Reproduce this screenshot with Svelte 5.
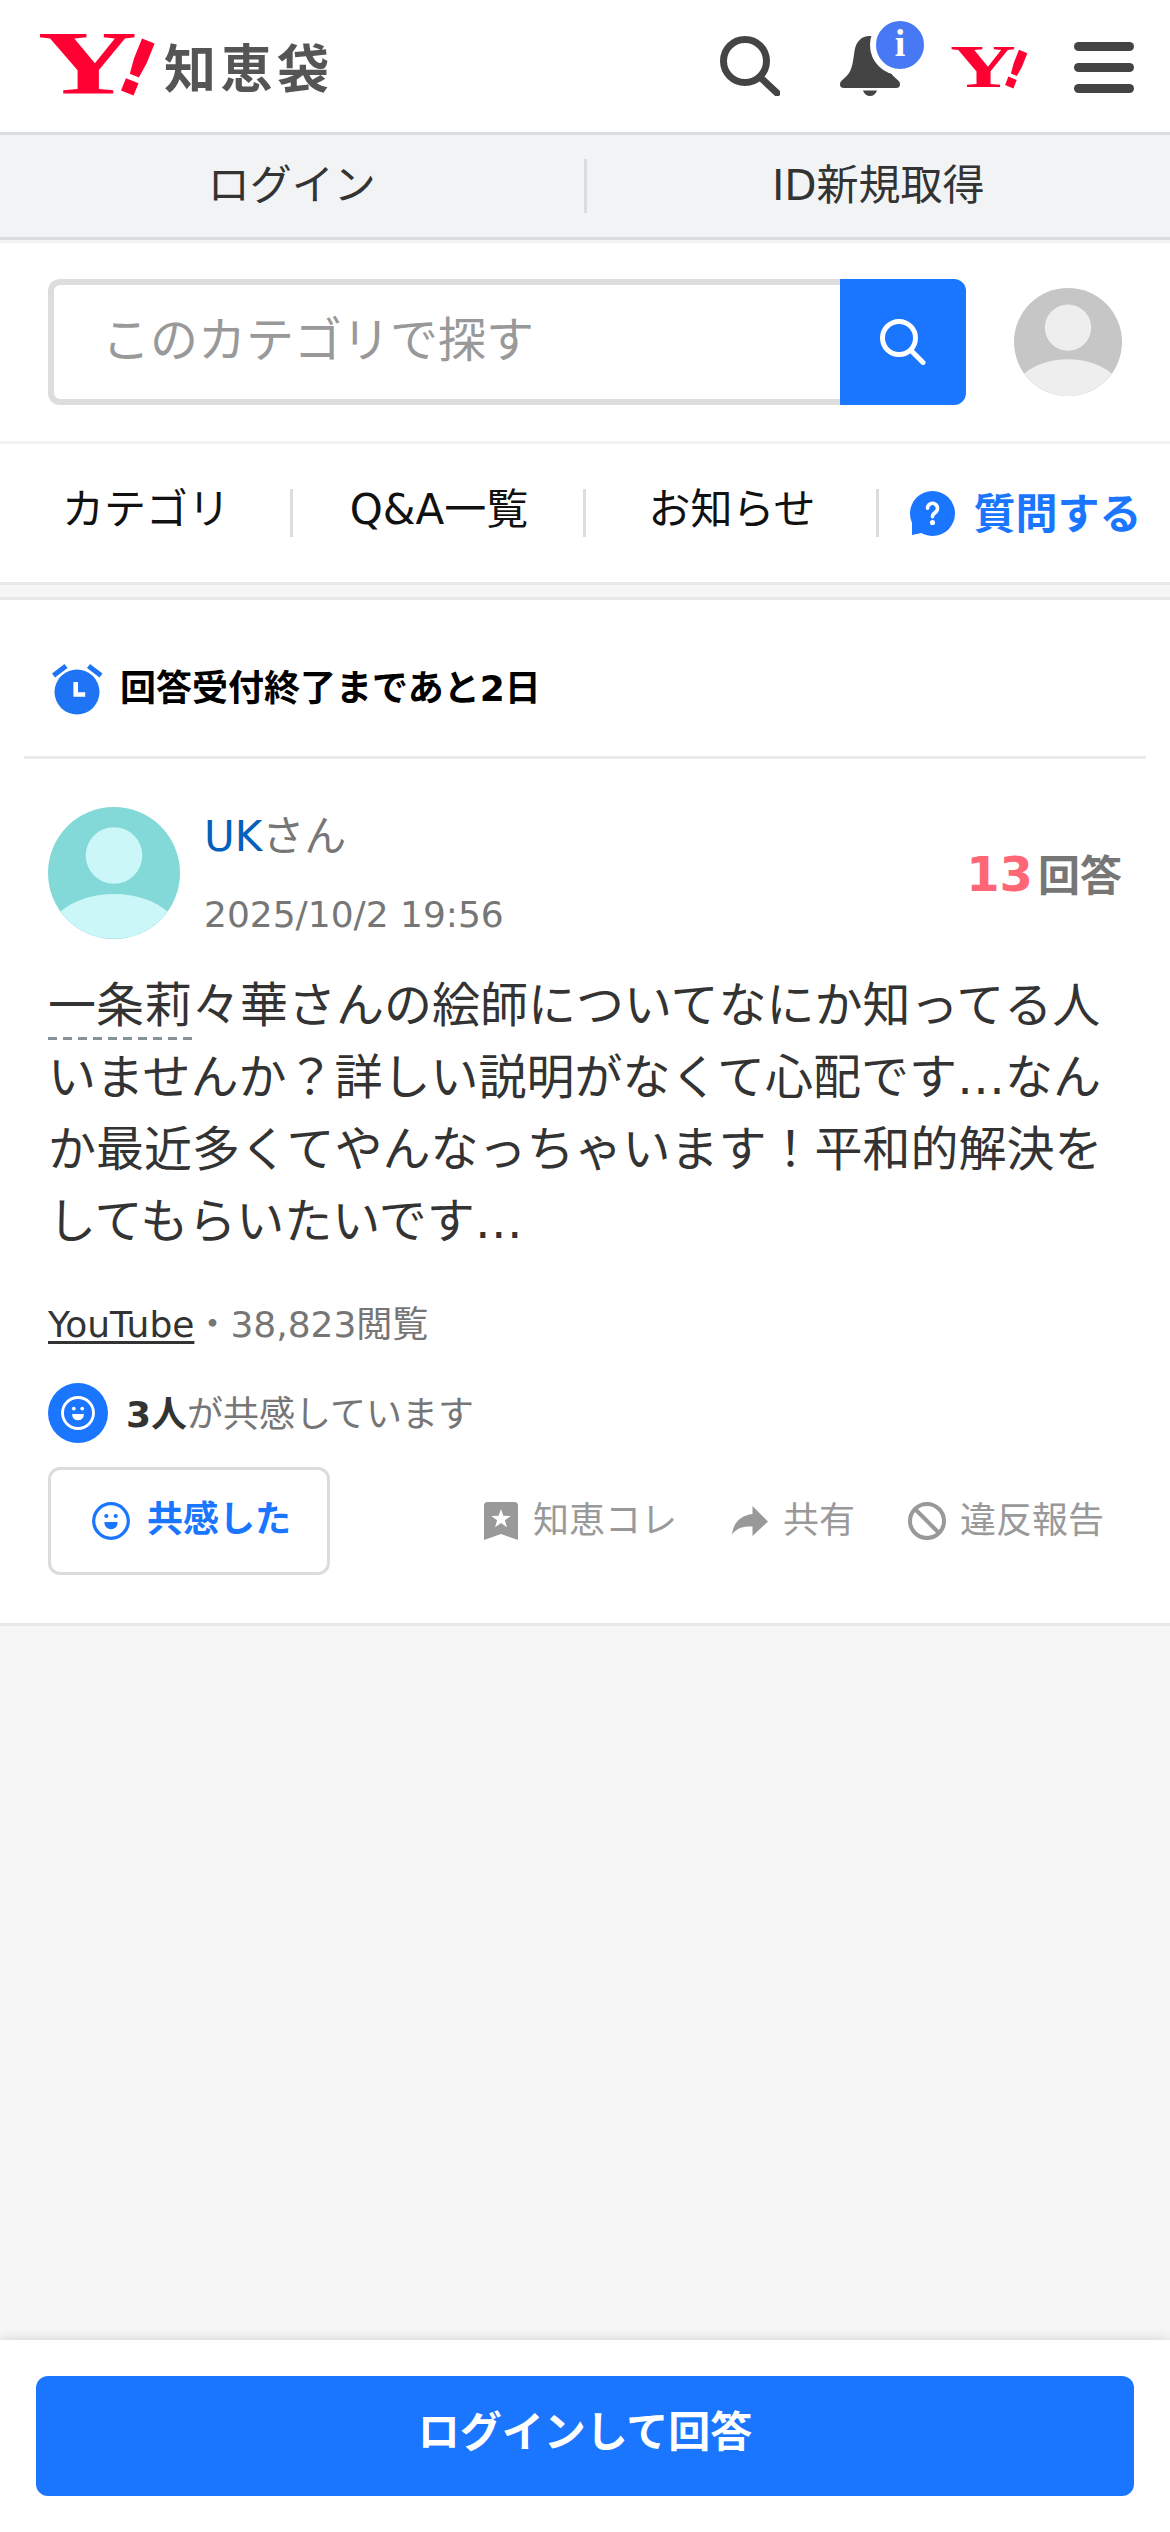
<script>
  const accountLinks = ['ログイン', 'ID新規取得'];
  const navItems = ['カテゴリ', 'Q&A一覧', 'お知らせ'];

  const question = {
    limit: '回答受付終了まであと2日',
    user: 'UK',
    date: '2025/10/2 19:56',
    answers: 13,
    keyword: '一条莉',
    body: '々華さんの絵師についてなにか知ってる人いませんか？詳しい説明がなくて心配です…なんか最近多くてやんなっちゃいます！平和的解決をしてもらいたいです…',
    category: 'YouTube',
    views: '38,823',
    empathy: 3,
  };
</script>

{#snippet yahoo()}
  <svg class="yahoo" viewBox="0 0 118 62" preserveAspectRatio="none">
    <text class="mark" transform="translate(-1.5 61) scale(1.5 1)" font-size="92">Y</text>
    <text class="mark bang" transform="translate(72 53.5) rotate(22)" font-size="77">!</text>
  </svg>
{/snippet}

{#snippet smile()}
  <svg class="smile" viewBox="0 0 38 38">
    <circle cx="19" cy="19" r="17.3" fill="none" stroke="currentColor" stroke-width="3.2" />
    <circle cx="14.3" cy="14" r="2.1" fill="currentColor" />
    <circle cx="23.7" cy="14" r="2.1" fill="currentColor" />
    <path d="M12.5 20h13v1.2a6.5 6 0 0 1-13 0z" fill="currentColor" />
  </svg>
{/snippet}

{#snippet person(back, front)}
  <svg viewBox="0 0 132 132">
    <circle cx="66" cy="66" r="66" fill={back} />
    <circle cx="66" cy="48.5" r="28.3" fill={front} />
    <path d="M12.5 104.5C25 94 44 87 66 87s41 7 53.5 17.5A66 66 0 0 1 12.5 104.5z" fill={front} />
  </svg>
{/snippet}

<div class="page">
  <header class="masthead">
    <a class="logo" href="#top">
      <span class="logo-mark">{@render yahoo()}</span>
      <span class="logo-text">知恵袋</span>
    </a>
    <div class="tools">
      <svg class="tool" viewBox="0 0 60 60">
        <circle cx="25" cy="25" r="21.5" fill="none" stroke="#444" stroke-width="7" />
        <path d="M41 42l16 15" stroke="#444" stroke-width="7" stroke-linecap="round" />
      </svg>
      <div class="bell">
        <svg class="tool" viewBox="0 0 60 60">
          <path d="M30 0c-9 0-14 6-15.5 15C12.5 29 12 36 4 42.5 1 45 0 46 0 48.5 0 51 1.5 52 4 52h52c2.5 0 4-1 4-3.5 0-2.5-1-3.5-4-6C48 36 47.5 29 45.5 15 44 6 39 0 30 0z" fill="#444" />
          <path d="M23 54.5h14c-1 3.5-3.8 5.5-7 5.5s-6-2-7-5.5z" fill="#444" />
        </svg>
        <span class="badge">i</span>
      </div>
      <span class="tool-y">{@render yahoo()}</span>
      <div class="menu"><i></i><i></i><i></i></div>
    </div>
  </header>

  <nav class="account">
    {#each accountLinks as label}
      <a href="#account">{label}</a>
    {/each}
  </nav>

  <div class="search-row">
    <div class="search-box">
      <span class="placeholder">このカテゴリで探す</span>
      <button class="search-btn" aria-label="検索">
        <svg viewBox="0 0 46 46">
          <circle cx="19" cy="19" r="16.5" fill="none" stroke="#fff" stroke-width="5" />
          <path d="M31.5 32l11.5 11.5" stroke="#fff" stroke-width="5" stroke-linecap="round" />
        </svg>
      </button>
    </div>
    <div class="me">{@render person('#c6c6c6', '#eee')}</div>
  </div>

  <nav class="main-nav">
    {#each navItems as item}
      <a href="#nav">{item}</a>
    {/each}
    <a class="ask" href="#ask">
      <svg viewBox="0 0 45 45">
        <circle cx="22.5" cy="22.5" r="22.5" fill="#1a75ff" />
        <path d="M2 28v16l14-3z" fill="#1a75ff" />
        <path d="M17.5 17.3a5 5 0 1 1 7.6 4.3c-1.9 1.2-2.6 2.1-2.6 4.2" fill="none" stroke="#fff" stroke-width="3.6" stroke-linecap="round" />
        <circle cx="22.5" cy="31.5" r="2.6" fill="#fff" />
      </svg>
      <span>質問する</span>
    </a>
  </nav>

  <main class="card">
    <div class="limit">
      <svg viewBox="0 0 51 51">
        <circle cx="25" cy="28" r="22.5" fill="#1f74f5" />
        <path d="M1.5 11.5L14 2M49 11.5L36.5 2" stroke="#1f74f5" stroke-width="5" />
        <path d="M23.7 18v12.5h9.5" fill="none" stroke="#fff" stroke-width="4.6" />
      </svg>
      <span>{question.limit}</span>
    </div>

    <div class="body">
      <div class="author">
        <div class="avatar">{@render person('#82d9d7', '#ccf7f8')}</div>
        <div class="who">
          <p class="name"><a href="#user">{question.user}</a>さん</p>
          <p class="date">{question.date}</p>
        </div>
        <p class="count"><strong>{question.answers}</strong>回答</p>
      </div>

      <p class="text"><span class="keyword">{question.keyword}</span>{question.body}</p>

      <p class="meta"><a href="#category">{question.category}</a>・{question.views}閲覧</p>

      <div class="empathy">
        <span class="disc">{@render smile()}</span>
        <p><b>{question.empathy}人</b>が共感しています</p>
      </div>

      <div class="actions">
        <button class="empathy-btn">{@render smile()}<span>共感した</span></button>
        <div class="links">
          <a class="save" href="#save">
            <svg viewBox="0 0 34 38">
              <path d="M3.5 0h27A3.5 3.5 0 0 1 34 3.5V38l-17-6-17 6V3.5A3.5 3.5 0 0 1 3.5 0z" fill="#999" />
              <path d="M17 7l2.4 6.8 7.4.1-5.9 4.4 2.1 7-6-4.2-6 4.2 2.1-7-5.9-4.4 7.4-.1z" fill="#fff" />
            </svg>
            <span>知恵コレ</span>
          </a>
          <a class="share" href="#share">
            <svg viewBox="0 0 36 30">
              <path d="M20.5 0L36 15.5 20.5 30v-9.5C11 20 5 22 0 28.5 1.5 17 8 9.5 20.5 8z" fill="#999" />
            </svg>
            <span>共有</span>
          </a>
          <a class="report" href="#report">
            <svg viewBox="0 0 38 38">
              <circle cx="19" cy="19" r="17" fill="none" stroke="#999" stroke-width="4" />
              <path d="M7 7l24 24" stroke="#999" stroke-width="4" />
            </svg>
            <span>違反報告</span>
          </a>
        </div>
      </div>
    </div>
  </main>

  <footer class="answer-bar">
    <button>ログインして回答</button>
  </footer>
</div>

<style>
  :global(body) { margin: 0; background: #f6f6f6; }

  .page {
    width: 1170px;
    height: 2532px;
    display: flex;
    flex-direction: column;
    overflow: hidden;
    background: #f6f6f6;
    color: #333;
    font-family: 'DejaVu Sans', 'Noto Sans CJK JP', sans-serif;
    font-size: 36px;
  }
  p { margin: 0; }
  a { color: inherit; text-decoration: none; }
  svg { display: block; flex: none; }
  button { font: inherit; border: 0; padding: 0; margin: 0; }

  /* header */
  .masthead {
    height: 132px;
    display: flex;
    justify-content: space-between;
    padding: 0 36px 0 39px;
    background: #fff;
    border-bottom: 3px solid #dadddf;
  }
  .logo { display: flex; align-items: flex-start; }
  .yahoo { width: 100%; height: 100%; overflow: visible; }
  .mark { font-family: 'Liberation Serif', serif; font-weight: 700; fill: #ff0033; }
  .bang { font-family: 'DejaVu Sans', sans-serif; }
  .logo-mark { width: 118px; height: 62px; margin-top: 33px; }
  .logo-text {
    margin: 40px 0 0 7px;
    font-size: 52px;
    line-height: 60px;
    font-weight: 700;
    letter-spacing: 4.5px;
    color: #555;
  }
  .tools { display: flex; align-items: center; }
  .tool { width: 60px; height: 60px; }
  .bell { position: relative; margin-left: 60px; }
  .badge {
    position: absolute;
    left: 30px;
    top: -21px;
    width: 48px;
    height: 48px;
    border: 6px solid #fff;
    border-radius: 50%;
    background: #4879f5;
    color: #fff;
    font: 700 38px/44px 'Liberation Serif', serif;
    text-align: center;
  }
  .tool-y { width: 78px; height: 42px; margin: 2px 45px 0 51px; }
  .menu { width: 60px; display: flex; flex-direction: column; gap: 12px; margin-top: 3px; }
  .menu i { height: 9px; border-radius: 4.5px; background: #444; }

  .account {
    height: 102px;
    display: flex;
    align-items: center;
    background: #f1f3f5;
    border-bottom: 3px solid #dadcdd;
  }
  .account a {
    flex: 1;
    font-size: 42px;
    line-height: 54px;
    text-align: center;
  }
  .account a + a { border-left: 3px solid #dadcdd; }

  /* search */
  .search-row {
    height: 198px;
    display: flex;
    align-items: center;
    justify-content: space-between;
    padding: 3px 48px 0;
    background: linear-gradient(#f4f4f4 3px, #fff 3px);
    border-bottom: 3px solid #f2f2f2;
  }
  .search-box { width: 918px; height: 126px; display: flex; }
  .placeholder {
    flex: 1;
    box-sizing: border-box;
    border: 6px solid #ddd;
    border-right: 0;
    border-radius: 12px 0 0 12px;
    padding-left: 48px;
    font-size: 48px;
    line-height: 110px;
    color: #999;
  }
  .search-btn {
    width: 126px;
    display: flex;
    align-items: center;
    justify-content: center;
    border-radius: 0 12px 12px 0;
    background: #1a75ff;
  }
  .search-btn svg { width: 46px; height: 46px; }
  .me { width: 108px; height: 108px; }

  .main-nav {
    height: 138px;
    display: flex;
    align-items: center;
    background: #fff;
    border-bottom: 3px solid #e8e8e8;
  }
  .main-nav a {
    flex: 0 0 293px;
    box-sizing: border-box;
    padding: 0 0 6px 2px;
    border-right: 3px solid #ddd;
    font-size: 42px;
    line-height: 42px;
    text-align: center;
    color: #111;
  }
  .main-nav .ask {
    flex: 1;
    display: flex;
    align-items: center;
    justify-content: center;
    gap: 18px;
    padding: 0 0 0 3px;
    border: 0;
    font-weight: 700;
    color: #1a75ff;
  }
  .ask svg { width: 45px; height: 45px; }
  .ask span { padding-top: 4px; }

  /* question card */
  .card {
    margin-top: 12px;
    background: #fff;
    border-top: 3px solid #e8e8e8;
    border-bottom: 3px solid #e8e8e8;
  }
  .limit {
    height: 159px;
    box-sizing: border-box;
    display: flex;
    align-items: center;
    gap: 17px;
    margin: 0 24px;
    padding: 22px 0 0 28px;
    border-bottom: 3px solid #ebebeb;
    line-height: 54px;
    font-weight: 700;
    color: #000;
  }
  .limit svg { width: 51px; height: 51px; }
  .body { padding: 48px; }
  .author { display: flex; align-items: flex-start; height: 132px; }
  .avatar { width: 132px; height: 132px; }
  .who { flex: 1; margin-left: 24px; color: #767676; }
  .name { font-size: 42px; line-height: 60px; }
  .name a { color: #0560bb; }
  .date { margin-top: 21px; line-height: 54px; }
  .count {
    margin-top: 37px;
    font-size: 42px;
    line-height: 60px;
    font-weight: 700;
    color: #767676;
  }
  .count strong { margin-right: 5px; font-size: 48px; color: #ff6676; }

  .text {
    margin-top: 30px;
    font-size: 48px;
    line-height: 72px;
    word-break: break-all;
  }
  .keyword {
    padding-bottom: 7px;
    background: repeating-linear-gradient(90deg, #859398 0 9px, transparent 9px 15px) 0 100% / 100% 3px no-repeat;
  }
  .meta { height: 54px; margin-top: 41px; line-height: 54px; color: #767676; }
  .meta a {
    color: #333;
    text-decoration: underline 3px;
    text-underline-offset: 4px;
    text-decoration-skip-ink: none;
  }
  .empathy {
    display: flex;
    align-items: center;
    margin-top: 31px;
    line-height: 54px;
    color: #767676;
  }
  .empathy p { padding-top: 3px; }
  .empathy b { color: #333; }
  .disc {
    width: 60px;
    height: 60px;
    margin-right: 18px;
    display: flex;
    align-items: center;
    justify-content: center;
    border-radius: 50%;
    background: #1a75ff;
    color: #fff;
  }
  .disc .smile { width: 34px; height: 34px; }

  .actions { display: flex; justify-content: space-between; margin-top: 24px; }
  .empathy-btn {
    width: 282px;
    height: 108px;
    box-sizing: border-box;
    display: flex;
    align-items: center;
    gap: 17px;
    padding-left: 41px;
    border: 3px solid #dcdcdc;
    border-radius: 12px;
    background: #fff;
    line-height: 54px;
    font-weight: 700;
    color: #1a75ff;
  }
  .empathy-btn span { padding-bottom: 2px; }
  .empathy-btn .smile { width: 38px; height: 38px; }
  .links { display: flex; align-items: center; margin-right: 18px; color: #999; }
  .links a { display: flex; align-items: center; line-height: 54px; }
  .save svg { width: 34px; height: 38px; margin-right: 15px; }
  .share { margin-left: 55px; }
  .share svg { width: 36px; height: 30px; margin-right: 15px; }
  .report { margin-left: 53px; }
  .report svg { width: 38px; height: 38px; margin-right: 14px; }

  .answer-bar {
    margin-top: auto;
    padding: 36px;
    background: #fff;
    box-shadow: 0 0 12px rgba(0, 0, 0, 0.16);
  }
  .answer-bar button {
    display: block;
    width: 100%;
    height: 120px;
    padding-bottom: 7px;
    border-radius: 12px;
    background: #1a75ff;
    color: #fff;
    font-size: 42px;
    line-height: 54px;
    font-weight: 700;
  }
</style>
